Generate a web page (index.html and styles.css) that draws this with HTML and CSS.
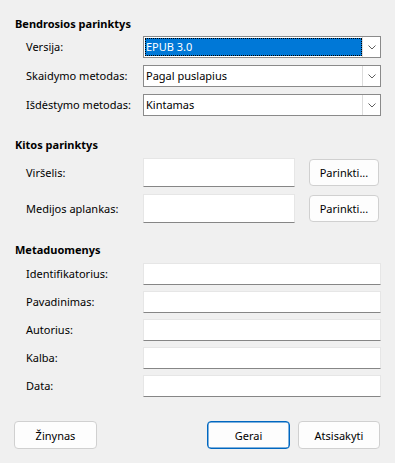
FILE: index.html
```html
<!DOCTYPE html>
<html lang="lt">
<head>
<meta charset="utf-8">
<title>EPUB eksportas</title>
<link rel="stylesheet" href="styles.css">
</head>
<body>
<div class="dialog">
  <section class="group group-general">
    <h2 class="group-title">Bendrosios parinktys</h2>
    <div class="rows rows-combo">
      <div class="row">
        <span class="label">Versija:</span>
        <div class="combo">
          <span class="combo-value combo-value-focused">EPUB 3.0</span>
          <span class="combo-drop"><svg width="8" height="5" viewBox="0 0 8 5"><path d="M0.5 0.5 L4 4 L7.5 0.5" fill="none" stroke="#5f5f5f" stroke-width="1"/></svg></span>
        </div>
      </div>
      <div class="row">
        <span class="label">Skaidymo metodas:</span>
        <div class="combo">
          <span class="combo-value">Pagal puslapius</span>
          <span class="combo-drop"><svg width="8" height="5" viewBox="0 0 8 5"><path d="M0.5 0.5 L4 4 L7.5 0.5" fill="none" stroke="#5f5f5f" stroke-width="1"/></svg></span>
        </div>
      </div>
      <div class="row">
        <span class="label">Išdėstymo metodas:</span>
        <div class="combo">
          <span class="combo-value">Kintamas</span>
          <span class="combo-drop"><svg width="8" height="5" viewBox="0 0 8 5"><path d="M0.5 0.5 L4 4 L7.5 0.5" fill="none" stroke="#5f5f5f" stroke-width="1"/></svg></span>
        </div>
      </div>
    </div>
  </section>

  <section class="group group-other">
    <h2 class="group-title">Kitos parinktys</h2>
    <div class="rows rows-browse">
      <div class="row">
        <span class="label">Viršelis:</span>
        <div class="browse">
          <span class="edit edit-tall"></span>
          <button class="btn btn-browse">Parinkti...</button>
        </div>
      </div>
      <div class="row">
        <span class="label">Medijos aplankas:</span>
        <div class="browse">
          <span class="edit edit-tall"></span>
          <button class="btn btn-browse">Parinkti...</button>
        </div>
      </div>
    </div>
  </section>

  <section class="group group-meta">
    <h2 class="group-title">Metaduomenys</h2>
    <div class="rows rows-meta">
      <div class="row"><span class="label">Identifikatorius:</span><span class="edit"></span></div>
      <div class="row"><span class="label">Pavadinimas:</span><span class="edit"></span></div>
      <div class="row"><span class="label">Autorius:</span><span class="edit"></span></div>
      <div class="row"><span class="label">Kalba:</span><span class="edit"></span></div>
      <div class="row"><span class="label">Data:</span><span class="edit"></span></div>
    </div>
  </section>

  <div class="buttons">
    <button class="btn btn-action">Žinynas</button>
    <span class="spacer"></span>
    <button class="btn btn-action btn-default">Gerai</button>
    <button class="btn btn-action">Atsisakyti</button>
  </div>
</div>
</body>
</html>
```

FILE: styles.css
```css
html, body {
  margin: 0;
  padding: 0;
  background: #f0f0f0;
}

body {
  font-family: "Noto Sans", "Open Sans", "Liberation Sans", sans-serif;
  font-size: 11px;
  color: #000;
}

.dialog {
  width: 395px;
  height: 463px;
  box-sizing: border-box;
  padding-top: 16px;
}

.group-title {
  margin: 0;
  padding-left: 15px;
  font-size: 11px;
  font-weight: 700;
  line-height: 16px;
}

.group-other {
  margin-top: 21px;
}

.group-meta {
  margin-top: 19px;
}

.rows {
  display: grid;
  padding-left: 26px;
  padding-right: 14px;
}

.rows-combo {
  margin-top: 4px;
  row-gap: 7px;
}

.rows-browse {
  margin-top: 5px;
  row-gap: 7px;
}

.rows-meta {
  margin-top: 5px;
  row-gap: 6px;
}

.row {
  display: grid;
  grid-template-columns: 117px 1fr;
  align-items: center;
  height: 22px;
}

.rows-browse .row {
  height: 29px;
}

.label {
  white-space: nowrap;
  line-height: 16px;
}

.combo {
  display: flex;
  height: 22px;
  box-sizing: border-box;
  border: 1px solid #8a8a8a;
  background: #fff;
}

.combo-value {
  flex: 1;
  margin: 1px 0 1px 1px;
  padding-left: 1px;
  line-height: 18px;
  white-space: nowrap;
}

.combo-value-focused {
  background: #0078d7;
  color: #fff;
  outline: 1px dotted #000;
  outline-offset: -1px;
}

.combo-drop {
  width: 17px;
  display: flex;
  align-items: center;
  justify-content: center;
  background: #fff;
  border-left: 1px solid #dcdcdc;
}

.edit {
  display: block;
  height: 22px;
  box-sizing: border-box;
  background: #fff;
  border: 1px solid #e6e6e6;
  border-bottom: 1px solid #868686;
}

.edit-tall {
  height: 29px;
  flex: 1;
}

.browse {
  display: flex;
  align-items: center;
  gap: 14px;
  padding-right: 2px;
}

.btn {
  font-family: inherit;
  font-size: 11px;
  color: #000;
  background: #fdfdfd;
  border: 1px solid #d0d0d0;
  border-radius: 4px;
  padding: 0;
  box-sizing: border-box;
}

.btn-browse {
  width: 70px;
  height: 27px;
}

.buttons {
  display: flex;
  margin-top: 24px;
  padding-left: 14px;
  padding-right: 15px;
  gap: 8px;
}

.spacer {
  flex: 1;
}

.btn-action {
  width: 83px;
  height: 28px;
}

.btn-action:last-child {
  width: 82px;
}

.btn-default {
  border: 1px solid #0067c0;
  box-shadow: inset 0 0 0 0.5px #0067c0;
}
```
